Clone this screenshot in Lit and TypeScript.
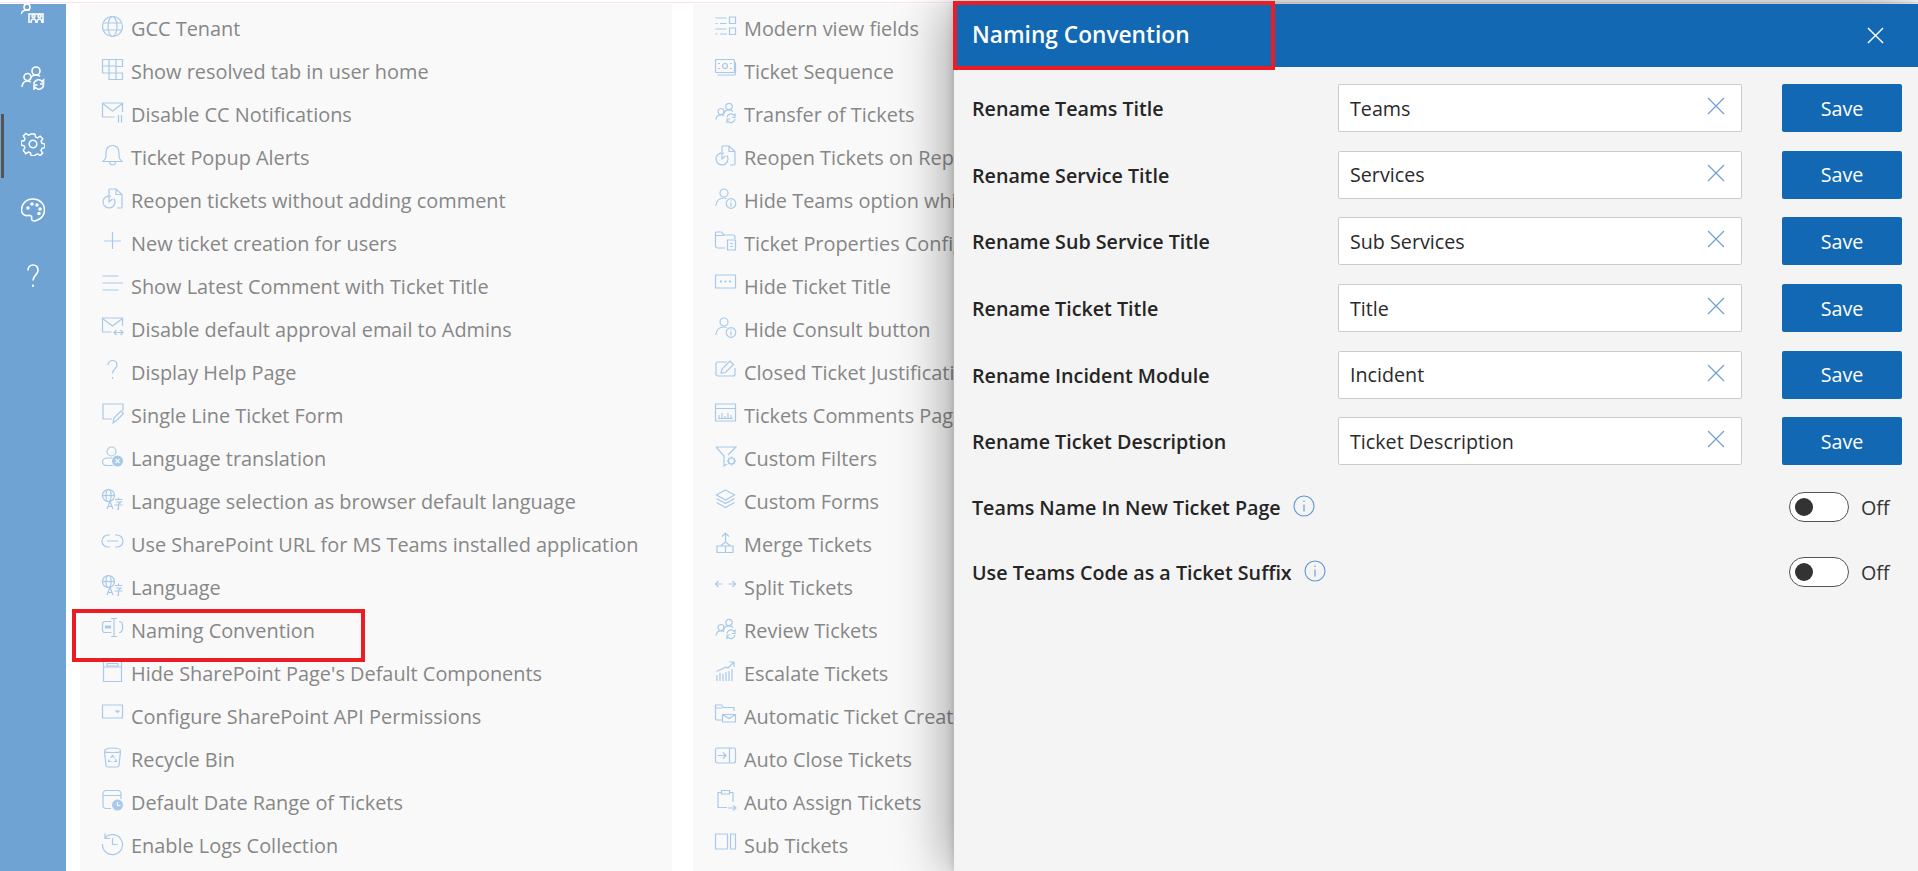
import { LitElement, html, css, svg } from "lit";
import { customElement } from "lit/decorators.js";

const people = svg`<circle cx="14" cy="4.5" r="3.2"/><path d="M8.5 12.5c.6-3 2.6-4.6 5.5-4.6 1.6 0 3 .6 4 1.6"/><circle cx="6" cy="9.5" r="3"/><path d="M1 17.5c.4-3 2.2-4.6 5-4.6 1.2 0 2.2.3 3 .9"/><path d="M12 15.5a4 4 0 0 1 7-2.2l1-1v3.2h-3.2M20 17a4 4 0 0 1-7 2.2l-1 1V17h3.2"/>`;
const personInfo = svg`<circle cx="9" cy="5" r="4"/><path d="M.8 18c.6-5 3.4-8 8-8 1 0 2 .2 2.8.5"/><circle cx="16" cy="15.5" r="4.8"/><path d="M16 14.5v4M16 12.3v1"/>`;
const reopen = svg`<path d="M8 1h6l6 5.500V19a1 1 0 0 1-1 1h-4M14 1v5.500h6M8 1a1 1 0 0 0-1 1v5"/><path d="M9 8.300A6 6 0 1 0 13 14a6 6 0 0 0-1-3.300M7 8v6l3.500-3"/>`;
const lang = svg`<circle cx="6.500" cy="6.500" r="6"/><ellipse cx="6.500" cy="6.500" rx="2.600" ry="6"/><path d="M.5 6.500h12"/><path d="M5 20l3-7.500 3 7.500M6.200 17.500h3.600M13 10.500h7.500M16.500 8.500v2M14 13h5l-2.500 2M12.500 16h8M16.500 15v5l-1.500.5"/>`;

const I: Record<string, unknown> = {
  globe: svg`<circle cx="10.500" cy="10.500" r="10"/><ellipse cx="10.500" cy="10.500" rx="4.500" ry="10"/><path d="M1.500 7h18M1.500 14h18"/>`,
  table: svg`<path d="M.5.5h20v7h-6.500v6.500h6.500v6.500H7v-6.500H.5zM.5 7h13.500M7 .5V14M14 .5V7M7 14h7M14 14v6.500"/>`,
  mailPause: svg`<path d="M20.500 10V1H.5v14h12"/><path d="M.5 1.500l10 7.500 10-7.500"/><path d="M16.500 13v7.500M19.500 13v7.500"/>`,
  bell: svg`<path d="M10.500.5c-4 0-6.500 3-6.500 7v4c0 2-1.500 3.500-3 5h19c-1.500-1.500-3-3-3-5v-4c0-4-2.500-7-6.500-7z"/><path d="M7.500 16.500c0 2.500 1.500 3.500 3 3.500s3-1 3-3.500"/>`,
  reopen,
  plus: svg`<path d="M10.500 1v17M2 10h17"/>`,
  lines: svg`<path d="M.5 2h16M.5 9h20.500M.5 16h16"/>`,
  mailArrows: svg`<path d="M20.500 9V1H.5v14h9"/><path d="M.5 1.500l10 7.500 10-7.500"/><path d="M12 15.500h9M14.500 13l-2.500 2.500 2.500 2.500M18.500 13l2.500 2.500-2.500 2.500"/>`,
  question: svg`<path d="M6 5c0-3 2-4.500 4.500-4.500S15 2 15 5c0 3.500-4.500 4-4.500 8.500"/><path d="M10.500 17v2"/>`,
  formPen: svg`<path d="M10 16H1V1h20v7"/><path d="M11 20l1-5 7-7 2.500 2.500-7 7z"/>`,
  personX: svg`<circle cx="9.500" cy="5.500" r="4.500"/><path d="M11 19.500H5c-2.500 0-4.500-1-4.500-3.500s2.500-4 5-4H10"/><circle cx="15.500" cy="15" r="5.500" fill="#a8c9ea" stroke="none"/><path d="M13.500 13l4 4M17.500 13l-4 4" stroke="#f9f9f9"/>`,
  lang,
  link: svg`<path d="M8 3H6a6 6 0 0 0 0 12h2M13 3h2a6 6 0 0 1 0 12h-2M5 9h11"/>`,
  rename: svg`<path d="M9.500 3.500H3a2.500 2.500 0 0 0-2.500 2.500v6A2.500 2.500 0 0 0 3 14.500h6.500M17 3.500a3.500 3.500 0 0 1 3.500 3.500v4a3.500 3.500 0 0 1-3.500 3.500"/><path d="M9 .5h6M9 18.500h6M12 .5v18"/><path d="M3.500 8h5v2h-5z" fill="#a8c9ea"/>`,
  page: svg`<path d="M1.500.5h18v20h-18zM1.500 6h18"/><path d="M5 2.500h11V5H5z"/>`,
  dropdown: svg`<path d="M.5 1h20v13H.5z"/><path d="M14 7h3l-1.500 1.500z" fill="#a8c9ea"/>`,
  bin: svg`<path d="M2.500 4.500l1.500 14c0 1 1 1.500 2 1.500h9c1 0 2-.5 2-1.500l1.500-14"/><path d="M2.500 4c0-1.500 2-3 8-3s8 1.500 8 3-2 1.500-8 1.500-8 0-8-1.500z"/><path d="M8.500 11l2-2.500 2 2.500M13.500 12l1 2.500h-3M7 12.500l-.5 2h3"/>`,
  calClock: svg`<path d="M9 18.500H4a3 3 0 0 1-3-3v-12a3 3 0 0 1 3-3h12a3 3 0 0 1 3 3V9M1 5.500h18"/><circle cx="15.500" cy="15" r="5.500" fill="#a8c9ea" stroke="none"/><path d="M15.500 12v3.500h3" stroke="#f9f9f9"/>`,
  history: svg`<path d="M3 5a10 10 0 1 1-2.500 6"/><path d="M3 .5V5.500h5M10.500 5v6.500h5"/>`,
  viewFields: svg`<path d="M.5 2h11M5 7.500h6.500M.5 7.500h2M.5 13h11M5 18h7M.5 18h2"/><path d="M14.500 1h6v6.500h-6zM14.500 12h6v6.500h-6z"/>`,
  ticket: svg`<path d="M.5 1.500a1 1 0 0 1 1-1h17a1 1 0 0 1 1 1v11a1 1 0 0 1-1 1h-17a1 1 0 0 1-1-1z"/><circle cx="10" cy="7" r="2.500"/><path d="M3 4.500h2M15 4.500h2M3 9.500h2M15 9.500h2M20.500 3.500V15a1 1 0 0 1-1 1H2.500"/>`,
  people,
  personInfo,
  folderDoc: svg`<path d="M10 17H2.500a2 2 0 0 1-2-2V2a1 1 0 0 1 1-1h5l2.500 3h9a2 2 0 0 1 2 2v2M.5 4.500H9"/><path d="M12.500 9h8v10h-8zM15 12.500h3M15 15.500h3"/>`,
  dots: svg`<path d="M.5 1h20v13H.5z"/><path d="M5 7.500h2M9.500 7.500h2M14 7.500h2" stroke-width="2"/>`,
  editBox: svg`<path d="M20 8v6a2 2 0 0 1-2 2H3a2 2 0 0 1-2-2V4a2 2 0 0 1 2-2h9"/><path d="M6 13l1-4 8-8 3.500 3.500-8 8z"/>`,
  report: svg`<path d="M.5 1h20v17H.5zM.5 5.500h20"/><path d="M4 15v-3M7 15v-5M10 15v-2M13 15v-5M16 15v-3M3 15.500h15"/>`,
  filterGear: svg`<path d="M1 1h20l-8 8M1 1l8 9v10l3-2"/><circle cx="16.500" cy="15" r="3"/><path d="M16.500 10.500v1.500M16.500 18v1.500M12 15h1.500M19.500 15H21M13.500 12l1 1M18.500 17l1 1M19.500 12l-1 1M14.500 17l-1 1" stroke-width="1.500"/>`,
  layers: svg`<path d="M10.500 1l9 5-9 5-9-5zM1.500 9.500l9 5 9-5M1.500 13.500l9 5 9-5"/>`,
  merge: svg`<path d="M10.500 10V1M7 4.500L10.500 1 14 4.500M10.500 10l-5 4M10.500 10l5 4"/><path d="M2 14h8.500v6.500H2zM10.500 14H18v6.500h-7.500z"/>`,
  split: svg`<path d="M.5 9h7M3.500 6l-3 3 3 3M13.500 9h7M17.500 6l3 3-3 3"/>`,
  chartUp: svg`<path d="M2 20v-6M5 20v-8M8 20v-7M11 20v-9M14 20v-10M17 20V8"/><path d="M1.500 10.500L11 6l2 1L18.500 1.500M14 1h5v5"/>`,
  folderMail: svg`<path d="M7 16H2a1.500 1.500 0 0 1-1.500-1.500V1h6l2 2.500H19V7M.5 4h7"/><path d="M7.500 10.500h13V18h-13zM7.500 10.500l6.500 4 6.500-4"/>`,
  arrowPanel: svg`<rect x=".5" y="1" width="20" height="15" rx="2"/><path d="M14.500 1v15M2.500 8.500h8M8 5.500l3 3-3 3"/>`,
  clipArrow: svg`<path d="M12 17.500H3v-15h3.500M14.500 2.500H18V12"/><path d="M6.500.5h8v3.500h-8zM13 18h8M18 15.500l3 2.500-3 2.500"/>`,
  panels: svg`<path d="M.5 1h12v15H.5zM15.500 1h5v15h-5z"/>`,
};

const left: [string, string][] = [
  ["globe", "GCC Tenant"], ["table", "Show resolved tab in user home"], ["mailPause", "Disable CC Notifications"],
  ["bell", "Ticket Popup Alerts"], ["reopen", "Reopen tickets without adding comment"], ["plus", "New ticket creation for users"],
  ["lines", "Show Latest Comment with Ticket Title"], ["mailArrows", "Disable default approval email to Admins"], ["question", "Display Help Page"],
  ["formPen", "Single Line Ticket Form"], ["personX", "Language translation"], ["lang", "Language selection as browser default language"],
  ["link", "Use SharePoint URL for MS Teams installed application"], ["lang", "Language"], ["rename", "Naming Convention"],
  ["page", "Hide SharePoint Page's Default Components"], ["dropdown", "Configure SharePoint API Permissions"], ["bin", "Recycle Bin"],
  ["calClock", "Default Date Range of Tickets"], ["history", "Enable Logs Collection"],
];
const right: [string, string][] = [
  ["viewFields", "Modern view fields"], ["ticket", "Ticket Sequence"], ["people", "Transfer of Tickets"],
  ["reopen", "Reopen Tickets on Reply"], ["personInfo", "Hide Teams option while"], ["folderDoc", "Ticket Properties Configuration"],
  ["dots", "Hide Ticket Title"], ["personInfo", "Hide Consult button"], ["editBox", "Closed Ticket Justification"],
  ["report", "Tickets Comments Page"], ["filterGear", "Custom Filters"], ["layers", "Custom Forms"],
  ["merge", "Merge Tickets"], ["split", "Split Tickets"], ["people", "Review Tickets"],
  ["chartUp", "Escalate Tickets"], ["folderMail", "Automatic Ticket Creation"], ["arrowPanel", "Auto Close Tickets"],
  ["clipArrow", "Auto Assign Tickets"], ["panels", "Sub Tickets"],
];
const fields: [string, string][] = [
  ["Rename Teams Title", "Teams"], ["Rename Service Title", "Services"], ["Rename Sub Service Title", "Sub Services"],
  ["Rename Ticket Title", "Title"], ["Rename Incident Module", "Incident"], ["Rename Ticket Description", "Ticket Description"],
];

@customElement("app-root")
export class AppRoot extends LitElement {
  static styles = css`
    :host { display: block; position: relative; height: 871px; overflow: hidden; background: #fff;
      font-family: "Open Sans", "Noto Sans", sans-serif; padding-top: 4px; box-sizing: border-box; }
    .pink { position: absolute; left: 0; right: 0; top: 2px; height: 1px; background: #f6e3f6; }
    .layout { display: flex; height: 100%; }
    .rail { width: 66px; flex: none; background: #6fa3d4; position: relative; overflow: hidden; display: flex; flex-direction: column; align-items: center; padding-top: 62px; gap: 42px; box-sizing: border-box; }
    .rail svg { width: 24px; height: 24px; fill: none; stroke: #fff; stroke-width: 1.6; flex: none; }
    .rail .first { position: absolute; left: 21px; top: 0; }
    .bar { position: absolute; left: 1px; top: 110px; width: 3px; height: 64px; background: #555; }
    .card { background: #f9f9f9; padding: 3px 0 0 22px; box-sizing: border-box; overflow: hidden; flex: none; }
    .card.a { width: 592px; margin-left: 14px; }
    .card.b { width: 261px; margin-left: 21px; }
    .item { height: 43px; display: flex; align-items: center; gap: 8px; font-size: 19.9px; color: #878787; white-space: nowrap; }
    .item svg { width: 21px; height: 21px; flex: none; fill: none; stroke: #a8c9ea; stroke-width: 1.2; margin-top: -5px; overflow: visible; }
    .item span { min-width: 0; overflow: hidden; }
    .panel { position: absolute; left: 954px; right: 0; top: 4px; bottom: 0; background: #f4f4f4; box-shadow: -8px 0 48px rgba(0,0,0,.34), -1px 0 8px rgba(0,0,0,.14); }
    .head { height: 63px; background: #1268b3; color: #fff; display: flex; align-items: center; justify-content: space-between; padding: 0 34px 0 18px; }
    .head h2 { margin: -2px 0 0; font-size: 22.7px; font-weight: 600; }
    .head svg { width: 17px; height: 17px; stroke: #fff; stroke-width: 1.5; fill: none; }
    .body { padding: 17px 16px 0 18px; display: flex; flex-direction: column; }
    .row { display: grid; grid-template-columns: 326px 404px 120px; column-gap: 40px; align-items: center; height: 48px; margin-bottom: 18.7px; }
    .label { font-size: 19.7px; font-weight: 600; color: #252525; white-space: nowrap; }
    .row .label { margin-top: 1px; }
    .input { height: 48px; box-sizing: border-box; background: #fff; border: 1px solid #ccc; border-radius: 2px; display: flex; align-items: center; justify-content: space-between; padding: 0 16px 0 11px; font-size: 19.7px; color: #2a2a2a; }
    .input svg { width: 18px; height: 18px; stroke: #6f9fd6; stroke-width: 1.2; fill: none; margin-top: -4px; }
    .save { height: 48px; background: #1268b3; border-radius: 2px; color: #fff; font-size: 19.7px; display: flex; align-items: center; justify-content: center; font-weight: 400; }
    .tog { display: flex; align-items: center; justify-content: space-between; height: 30px; margin-bottom: 35px; }
    .row + .tog { margin-top: 8px; }
    .tl { display: flex; align-items: center; gap: 12px; }
    .tl svg { width: 22px; height: 22px; stroke: #5f97d4; stroke-width: 1.1; fill: none; margin-top: -3px; }
    .tr { display: flex; align-items: center; gap: 12px; font-size: 19.7px; color: #333; width: 113px; }
    .switch { width: 60px; height: 30px; box-sizing: border-box; border: 1px solid #555; border-radius: 15px; background: #fff; position: relative; flex: none; }
    .switch::after { content: ""; position: absolute; left: 5px; top: 5px; width: 18px; height: 18px; border-radius: 50%; background: #333; }
    .mark { position: absolute; border: 4px solid #ec1c24; box-sizing: border-box; pointer-events: none; }
    .m1 { left: 72px; top: 609px; width: 293px; height: 53px; }
    .m2 { left: 953px; top: 1px; width: 322px; height: 69px; }
  `;

  private x() {
    return svg`<path d="M1 1l16 16M17 1L1 17"/>`;
  }

  private items(list: [string, string][]) {
    return list.map(([k, t]) => html`<div class="item"><svg viewBox="0 0 21 21">${I[k]}</svg><span>${t}</span></div>`);
  }

  private info() {
    return html`<svg viewBox="0 0 22 22"><circle cx="11" cy="11" r="10"/><path d="M11 9.500v7M11 5.500v1.500"/></svg>`;
  }

  render() {
    return html`
      <div class="pink"></div>
      <div class="layout">
        <nav class="rail">
          <svg class="first" viewBox="0 0 24 24"><circle cx="6" cy="3" r="3"/><path d="M0 10c1-3 3-4 6-4h3"/><path d="M8 19v-9h14v9M10 19c0-3 1-4 2.500-4s2.500 1 2.500 4M16 19c0-3 1-4 2.500-4S21 16 21 19"/><circle cx="12.500" cy="12" r="1.500"/><circle cx="18.500" cy="12" r="1.500"/></svg>
          <svg viewBox="0 0 24 24"><circle cx="15" cy="5" r="4"/><path d="M9 14c.5-3 3-5 6-5 1.500 0 3 .5 4 1.500"/><circle cx="6.500" cy="11" r="3.500"/><path d="M1 21c.3-3.500 2.500-6 5.500-6 1.300 0 2.300.4 3.200 1"/><path d="M13 18a4.500 4.500 0 0 1 8-2.500l1.500-1.500v4H19M22.500 19a4.500 4.500 0 0 1-8 2.500L13 23v-4h3.500"/></svg>
          <svg viewBox="0 0 24 24"><circle cx="12" cy="12" r="3.800"/><path d="M10 1h4l.8 3.300 2.200.9 2.900-1.800 2.800 2.800-1.800 2.900.9 2.200 3.200.7v4l-3.300.8-.9 2.200 1.800 2.900-2.800 2.800-2.900-1.800-2.200.9-.7 1.200h-4l-.8-3.300-2.200-.9-2.900 1.800L1.300 19l1.800-2.900-.9-2.200L-1 13V9l3.300-.8.9-2.200L1.300 3.200 4 .4l2.900 1.800 2.200-.9z" transform="translate(1.100 1.100) scale(.91)"/></svg>
          <svg viewBox="0 0 24 24"><path d="M12 1C5 1 .5 6 .5 12c0 4 3 6 6 5.500 2-.3 3.500-.5 4 1 .5 1.500-.5 2 .5 3.500 1 1.200 3 1.200 5 .3 4-1.800 7.500-5.500 7.500-10.300C23.500 5.500 18.500 1 12 1z"/><circle cx="7" cy="10" r="1" fill="#fff"/><circle cx="11" cy="6" r="1" fill="#fff"/><circle cx="16" cy="7" r="1" fill="#fff"/><circle cx="19" cy="11" r="1" fill="#fff"/><circle cx="18" cy="15.500" r="1" fill="#fff"/></svg>
          <svg viewBox="0 0 24 24"><path d="M7 6.500C7 3 9 1 12 1s5 2 5 5.500c0 4-5 5-5 10"/><path d="M12 20.500v2.500"/></svg>
          <div class="bar"></div>
        </nav>
        <section class="card a">${this.items(left)}</section>
        <section class="card b">${this.items(right)}</section>
      </div>
      <aside class="panel">
        <header class="head"><h2>Naming Convention</h2><svg viewBox="0 0 18 18">${this.x()}</svg></header>
        <div class="body">
          ${fields.map(([l, v]) => html`
            <div class="row">
              <div class="label">${l}</div>
              <div class="input"><span>${v}</span><svg viewBox="0 0 18 18">${this.x()}</svg></div>
              <div class="save">Save</div>
            </div>`)}
          <div class="tog"><div class="tl"><span class="label">Teams Name In New Ticket Page</span>${this.info()}</div><div class="tr"><span class="switch"></span><span>Off</span></div></div>
          <div class="tog"><div class="tl"><span class="label">Use Teams Code as a Ticket Suffix</span>${this.info()}</div><div class="tr"><span class="switch"></span><span>Off</span></div></div>
        </div>
      </aside>
      <div class="mark m1"></div>
      <div class="mark m2"></div>
    `;
  }
}
